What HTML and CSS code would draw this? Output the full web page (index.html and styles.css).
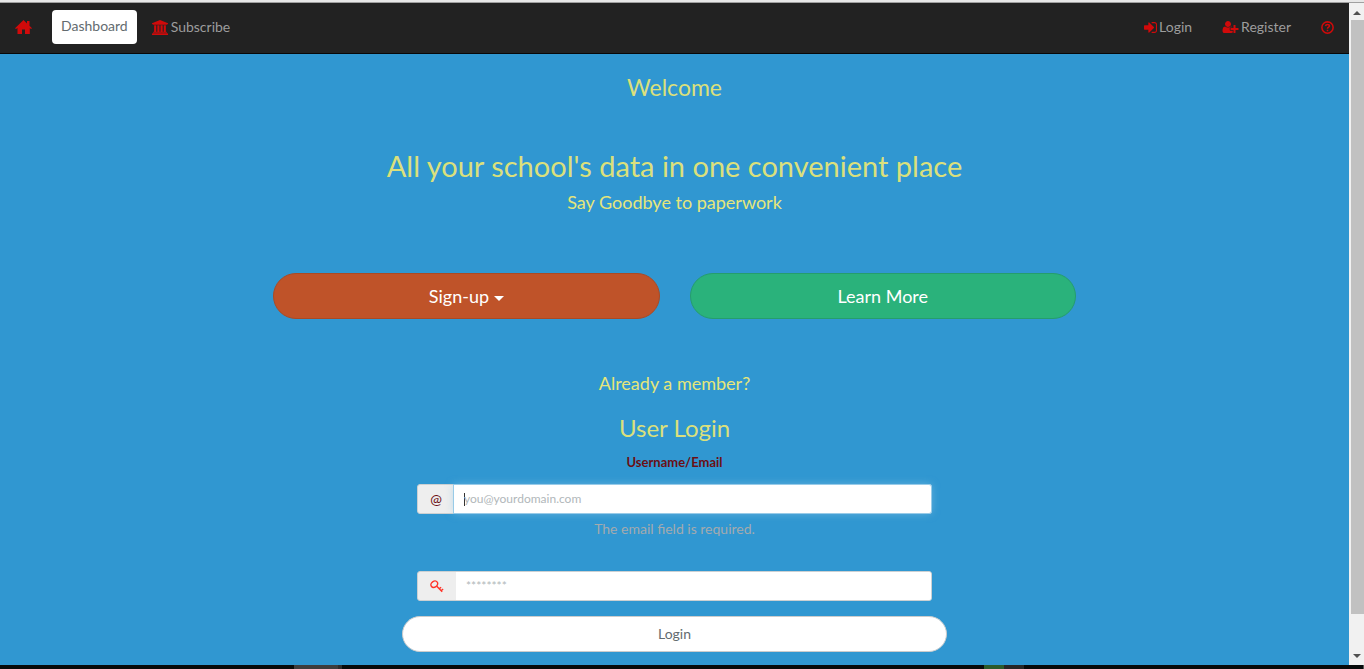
FILE: index.html
```
<!DOCTYPE html>
<html lang="en">
<head>
<meta charset="utf-8">
<meta name="viewport" content="width=device-width, initial-scale=1">
<title>Welcome</title>
<link rel="stylesheet" href="styles.css">
</head>
<body>
<div class="screen">
  <div class="top-edge"></div>
  <div class="viewport">
    <div class="page">
      <nav class="navbar">
        <a class="nav-link" href="#" aria-label="Home">
          <svg class="icon icon-home" viewBox="0 0 17 14"><path d="M8.500 0 12 3.400V1h2.500v4.800L17 8.200l-1 .8-1.200-1V14H10V9.500H7V14H2.500V8L1 9 0 8.200z"/></svg>
        </a>
        <a class="nav-tab" href="#">Dashboard</a>
        <a class="nav-link" href="#">
          <svg class="icon icon-bank" viewBox="0 0 1920 1792"><path d="M960 0l960 384v128h-128q0 26-20.500 45t-48.500 19h-1526q-28 0-48.500-19t-20.500-45h-128v-128zM256 640h256v768h128v-768h256v768h128v-768h256v768h128v-768h256v768h59q28 0 48.500 19t20.500 45v64h-1664v-64q0-26 20.500-45t48.500-19h59v-768zM1851 1600q28 0 48.500 19t20.500 45v128h-1920v-128q0-26 20.500-45t48.500-19h1782z"/></svg>
          Subscribe
        </a>
        <div class="nav-right">
          <a class="nav-link" href="#">
            <svg class="icon icon-signin" viewBox="0 128 1536 1536"><path d="M1184 896q0 26-19 45l-544 544q-19 19-45 19t-45-19-19-45v-288h-448q-26 0-45-19t-19-45v-384q0-26 19-45t45-19h448v-288q0-26 19-45t45-19 45 19l544 544q19 19 19 45zm352-352v704q0 119-84.500 203.500t-203.500 84.500h-320q-13 0-22.500-9.500t-9.500-22.500q0-4-1-20t-.5-26.500 3-23.500 10-19.500 20.500-6.500h320q66 0 113-47t47-113v-704q0-66-47-113t-113-47h-312l-11.500-1-11.500-3-8-5.500-7-9-2-13.500q0-4-1-20t-.5-26.500 3-23.500 10-19.500 20.500-6.500h320q119 0 203.500 84.500t84.500 203.500z"/></svg>
            Login
          </a>
          <a class="nav-link" href="#">
            <svg class="icon icon-user" viewBox="0 0 2048 1792"><path d="M704 896q-159 0-271.500-112.500t-112.500-271.500 112.500-271.500 271.500-112.500 271.500 112.500 112.500 271.500-112.500 271.500-271.500 112.500zm960 128h352q13 0 22.500 9.500t9.500 22.500v192q0 13-9.500 22.500t-22.500 9.500h-352v352q0 13-9.500 22.500t-22.500 9.500h-192q-13 0-22.500-9.500t-9.500-22.500v-352h-352q-13 0-22.500-9.500t-9.500-22.500v-192q0-13 9.500-22.500t22.500-9.500h352v-352q0-13 9.500-22.500t22.500-9.500h192q13 0 22.500 9.500t9.500 22.500v352zm-736 224q0 52 38 90t90 38h256v238q-68 50-171 50h-874q-121 0-194-69t-73-190q0-53 3.500-103.500t14-109 26.500-108.500 43-97.500 62-81 85.500-53.500 111.500-20q19 0 39 17 79 61 154.500 91.500t164.500 30.500 164.500-30.500 154.500-91.500q20-17 39-17 132 0 217 96h-223q-52 0-90 38t-38 90v192z"/></svg>
            Register
          </a>
          <a class="nav-link" href="#" aria-label="Help">
            <svg class="icon icon-help icon-line" viewBox="0 0 12 12"><circle cx="6" cy="6" r="5.200"/><path d="M4.200 4.700C4.300 3.600 5.100 3.200 6 3.200c1 0 1.800.6 1.800 1.500C7.800 5.800 6 5.700 6 7.100M6 8v1.400"/></svg>
          </a>
        </div>
      </nav>

      <main class="content">
        <h3 class="heading">Welcome</h3>
        <section class="hero">
          <h2 class="hero-title">All your school's data in one convenient place</h2>
          <h4 class="subheading">Say Goodbye to paperwork</h4>
        </section>
        <div class="actions">
          <button class="pill pill-signup" type="button">Sign-up <span class="caret"></span></button>
          <button class="pill pill-learn" type="button">Learn More</button>
        </div>
        <h4 class="subheading">Already a member?</h4>
        <form class="login">
          <h3 class="heading login-title">User Login</h3>
          <div class="fields">
            <label class="field-label" for="email">Username/Email</label>
            <div class="input-group">
              <span class="addon">@</span>
              <input class="input input-active" id="email" type="email" placeholder="you@yourdomain.com">
            </div>
            <p class="help">The email field is required.</p>
            <div class="input-group">
              <label class="addon addon-key" for="password" aria-label="Password">
                <svg class="icon-key icon-line" viewBox="0 0 14 13"><ellipse cx="4.300" cy="4.200" rx="3.600" ry="2.900" transform="rotate(-35 4.300 4.200)"/><path d="M6.800 6.300 12.200 11.800M9.300 8.800l1.800-1.600M11.200 10.700l1.900-1.700"/></svg>
              </label>
              <input class="input" id="password" type="password" placeholder="********">
            </div>
          </div>
          <button class="pill pill-login" type="submit">Login</button>
        </form>
      </main>
    </div>
    <div class="scrollbar">
      <svg class="arrow" viewBox="0 0 8 4"><path d="M4 0 8 4H0z"/></svg>
      <div class="thumb"></div>
      <svg class="arrow" viewBox="0 0 8 4"><path d="M0 0h8L4 4z"/></svg>
    </div>
  </div>
  <div class="taskbar">
    <span class="task task-gray"></span>
    <span class="task task-green"></span>
    <span class="task task-dark"></span>
    <span class="task-end"></span>
  </div>
</div>
</body>
</html>
```
FILE: styles.css
```
* { box-sizing: border-box; }
body {
  margin: 0;
  font: 14px/20px Lato, "Liberation Sans", sans-serif;
  color: #555;
}
h2, h3, h4, p { margin: 0; font-weight: 400; }
button, input { font: inherit; }
a { text-decoration: none; }

.screen { display: flex; flex-direction: column; min-height: 100vh; }
.top-edge { height: 3px; background: #e8e8e8; border-bottom: 1px solid #a0a0a0; }
.viewport { display: flex; flex: 1; }
.page { flex: 1; background: #3097d1; }

.navbar {
  display: flex;
  align-items: center;
  min-height: 51px;
  background: #222;
  border-bottom: 1px solid #080808;
}
.nav-link {
  display: flex;
  align-items: center;
  gap: 3px;
  padding: 14px 15px 16px;
  color: #9d9d9d;
}
.nav-tab {
  margin: 0 0 2px 5px;
  padding: 6px 9px 8px;
  background: #fff;
  border-radius: 4px;
  color: #636b6f;
}
.nav-right { display: flex; margin-left: auto; }
.nav-right .nav-link { gap: 2px; }
.icon { fill: #d10a0a; }
.icon-line { fill: none; stroke: #d10a0a; stroke-width: 1.4; }
.icon-home { width: 17px; height: 14px; }
.icon-bank { width: 16px; height: 15px; }
.icon-signin { width: 13px; height: 13px; }
.icon-user { width: 17px; height: 14px; }
.icon-help { width: 13px; height: 13px; }

.content {
  display: flex;
  flex-direction: column;
  align-items: center;
  padding: 20px 15px 13px;
  text-align: center;
}
.heading { font-size: 23px; line-height: 26px; color: #dbe07c; }
.login-title { font-size: 24px; }
.hero { padding: 49px 0 50px; }
.hero-title { font-size: 29px; line-height: 33px; color: #dbe07c; }
.hero .subheading { margin-top: 10px; }
.subheading { font-size: 18px; line-height: 20px; color: #e6e67a; }
.actions {
  display: grid;
  grid-template-columns: 1fr 1fr;
  gap: 30px;
  width: 100%;
  max-width: 803px;
  margin: 11px 0 54px;
}
.pill { border: 1px solid; border-radius: 32px; }
.pill-signup, .pill-learn { padding: 10px 16px; font-size: 18px; line-height: 24px; color: #fff; }
.pill-signup { background: #bf5329; border-color: #aa4a24; }
.pill-learn { background: #2ab27b; border-color: #259d6d; }
.caret {
  display: inline-block;
  vertical-align: middle;
  border: 5px solid transparent;
  border-top-color: #fff;
  border-bottom: 0;
}

.login { width: 100%; max-width: 545px; margin-top: 22px; }
.fields { padding: 11px 15px 15px; }
.field-label { display: block; margin-bottom: 12px; font-weight: 700; font-size: 13px; color: #6b0f14; }
.input-group {
  display: flex;
  height: 30px;
  border: 1px solid #ccd0d2;
  border-radius: 3px;
  background: #eee;
}
.addon {
  display: flex;
  flex: 0 0 36px;
  align-items: center;
  justify-content: center;
  color: #6b0f14;
}
.addon-key { flex-basis: 38px; }
.icon-key { width: 14px; height: 13px; stroke: #ff3328; }
.input {
  flex: 1;
  min-width: 0;
  padding: 5px 10px;
  border: 0;
  border-radius: 0 2px 2px 0;
  outline: 0;
  background: #fff;
  font-size: 12px;
  color: #555;
}
.input::placeholder { color: #b1b7ba; }
.input-active {
  background: linear-gradient(#333, #333) 10px center / 1px 13px no-repeat #fff;
  box-shadow: 0 0 0 1px #98cbe8, 0 0 8px rgba(152, 203, 232, .6);
}
.help { margin: 5px 0 32px; color: #a4aaae; }
.pill-login {
  display: block;
  width: 100%;
  padding: 7px 12px;
  background: #fff;
  border-color: #ccc;
  color: #636b6f;
}

.scrollbar {
  display: flex;
  flex: 0 0 15px;
  flex-direction: column;
  align-items: center;
  padding: 8px 0 7px;
  background: #f1f1f1;
}
.arrow { width: 8px; height: 4px; fill: #505050; }
.thumb { flex: 1; align-self: stretch; margin: 5px 0 40px 2px; background: #c1c1c1; }

.taskbar { display: flex; height: 4px; padding-left: 294px; background: #070a0a; }
.task { width: 20px; }
.task-gray { width: 48px; background: #3d3d3d; border-right: 4px solid #2c2c2c; }
.task-green { margin-left: auto; background: #2b5a2b; }
.task-dark { background: #262626; }
.task-end { width: 340px; border-right: 1px solid #555; }
```
